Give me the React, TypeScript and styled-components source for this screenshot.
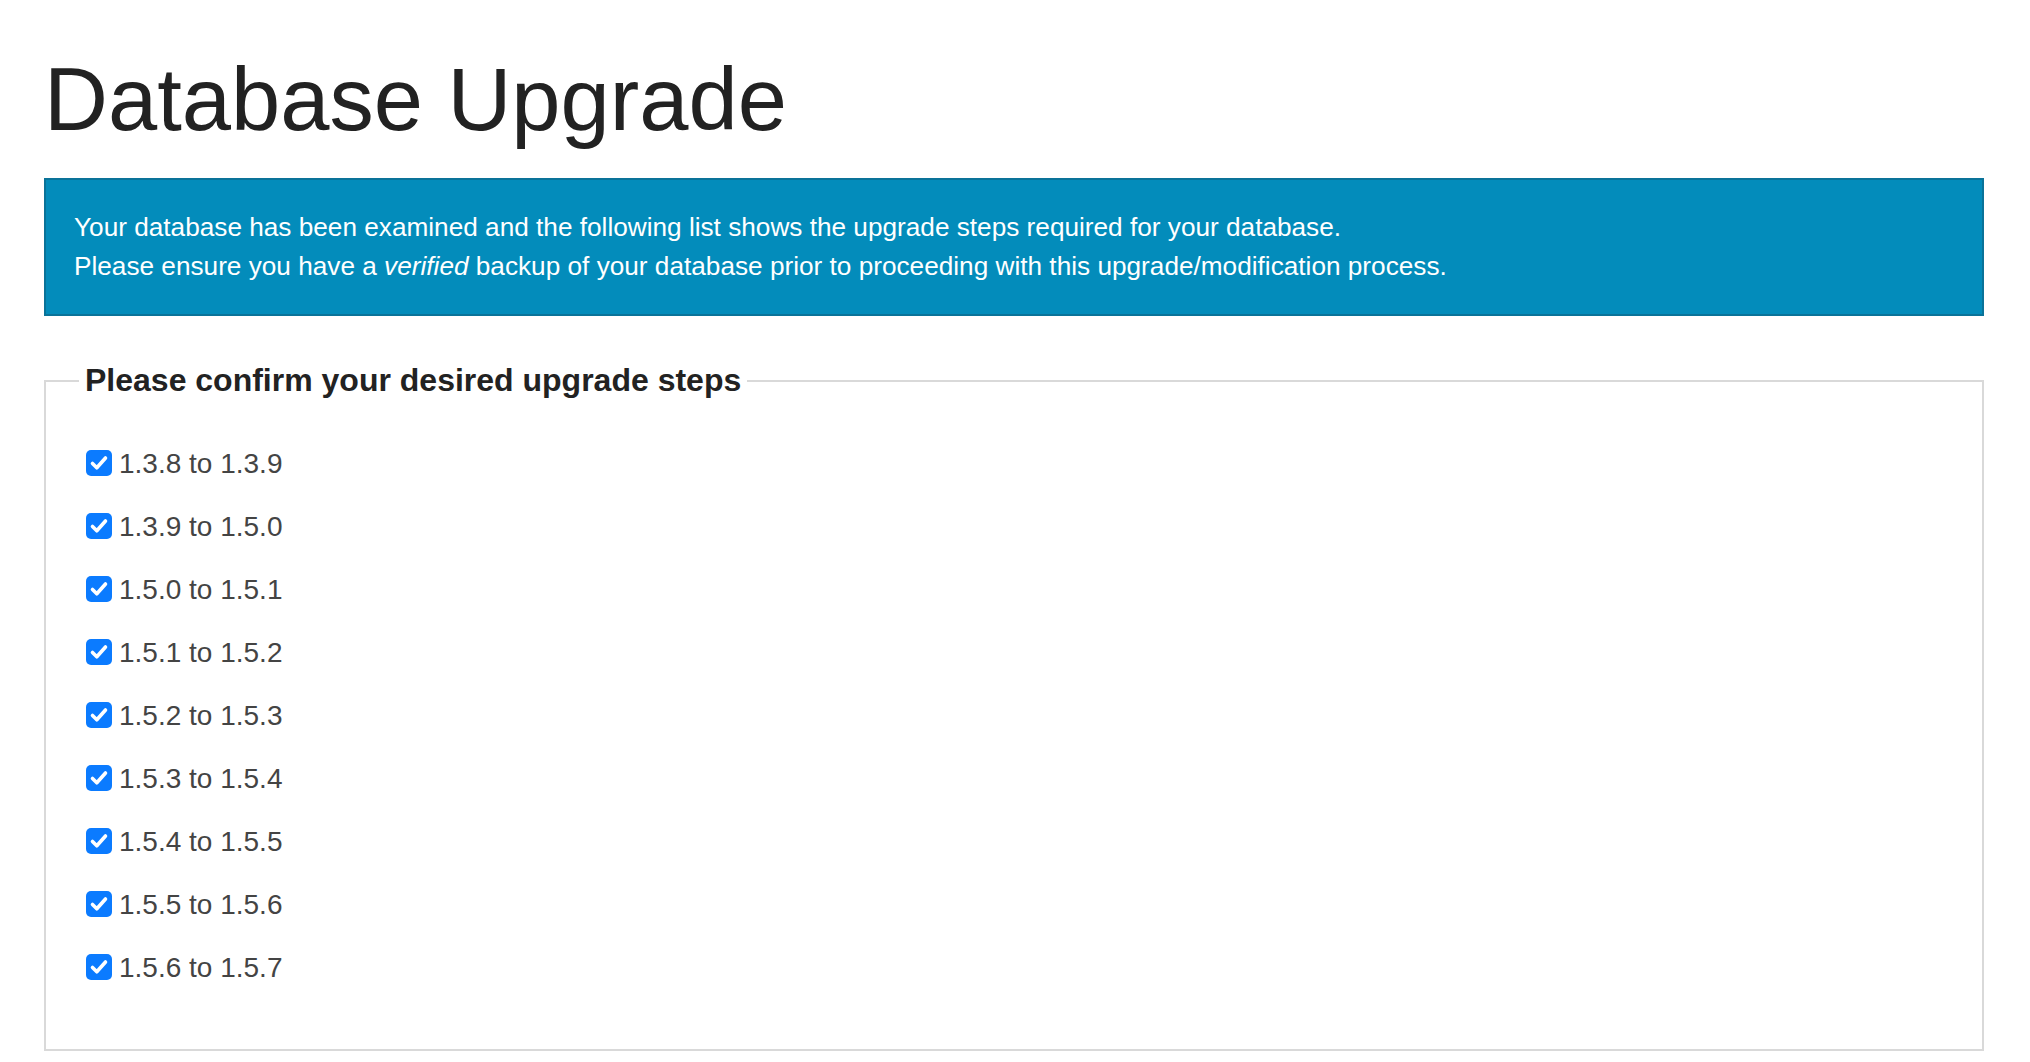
import { useState } from "react";
import styled, { createGlobalStyle } from "styled-components";

const GlobalStyle = createGlobalStyle`
  html, body {
    margin: 0;
    padding: 0;
    background: #ffffff;
  }

  body {
    font-family: "Liberation Sans", Arial, Helvetica, sans-serif;
    color: #222222;
  }
`;

const Page = styled.div`
  padding: 47px 46px 0 44px;
  box-sizing: border-box;
  width: 2030px;
  min-height: 1062px;
`;

const Title = styled.h1`
  margin: 0 0 25px 0;
  font-size: 88.5px;
  font-weight: 400;
  line-height: 1.2;
  color: #222222;
`;

const Alert = styled.div`
  background-color: #038cbb;
  border: 2px solid #0a7399;
  color: #ffffff;
  padding: 28px 28px;
  font-size: 26.2px;
  line-height: 39px;

  p {
    margin: 0;
  }
`;

const StepsFieldset = styled.fieldset`
  margin: 46px 0 0 0;
  border: 2px solid #d9d9d9;
  padding: 44px 33px 60px 40px;
  min-width: 0;
`;

const Legend = styled.legend`
  margin-left: -7px;
  padding: 0 6px;
  font-size: 32px;
  font-weight: 700;
  color: #222222;
`;

const StepList = styled.div`
  display: flex;
  flex-direction: column;
  gap: 21px;
`;

const StepRow = styled.label`
  display: flex;
  align-items: center;
  gap: 7px;
  height: 42px;
  font-size: 28px;
  line-height: 42px;
  color: #444444;
  cursor: pointer;
  user-select: none;
`;

const HiddenInput = styled.input`
  position: absolute;
  opacity: 0;
  width: 0;
  height: 0;
  margin: 0;
`;

const Box = styled.span<{ $checked: boolean }>`
  display: inline-flex;
  align-items: center;
  justify-content: center;
  width: 26px;
  height: 26px;
  margin-top: -2px;
  border-radius: 5px;
  box-sizing: border-box;
  background: ${({ $checked }) => ($checked ? "#0b7bff" : "#ffffff")};
  border: ${({ $checked }) => ($checked ? "none" : "1px solid #8a8a8a")};
  flex-shrink: 0;
`;

const steps = [
  "1.3.8 to 1.3.9",
  "1.3.9 to 1.5.0",
  "1.5.0 to 1.5.1",
  "1.5.1 to 1.5.2",
  "1.5.2 to 1.5.3",
  "1.5.3 to 1.5.4",
  "1.5.4 to 1.5.5",
  "1.5.5 to 1.5.6",
  "1.5.6 to 1.5.7",
];

const Step = ({ label }: { label: string }) => {
  const [checked, setChecked] = useState(true);

  return (
    <StepRow>
      <HiddenInput
        type="checkbox"
        checked={checked}
        onChange={(e) => setChecked(e.target.checked)}
      />
      <Box $checked={checked}>
        {checked && (
          <svg width="26" height="26" viewBox="0 0 26 26">
            <path
              d="M6.5 13.5 L10.8 17.8 L19.5 8"
              fill="none"
              stroke="#ffffff"
              strokeWidth="3.6"
              strokeLinecap="round"
              strokeLinejoin="round"
            />
          </svg>
        )}
      </Box>
      {label}
    </StepRow>
  );
};

export default function App() {
  return (
    <>
      <GlobalStyle />
      <Page>
        <Title>Database Upgrade</Title>
        <Alert>
          <p>
            Your database has been examined and the following list shows the
            upgrade steps required for your database.
          </p>
          <p>
            Please ensure you have a <em>verified</em> backup of your database
            prior to proceeding with this upgrade/modification process.
          </p>
        </Alert>
        <StepsFieldset>
          <Legend>Please confirm your desired upgrade steps</Legend>
          <StepList>
            {steps.map((step) => (
              <Step key={step} label={step} />
            ))}
          </StepList>
        </StepsFieldset>
      </Page>
    </>
  );
}
